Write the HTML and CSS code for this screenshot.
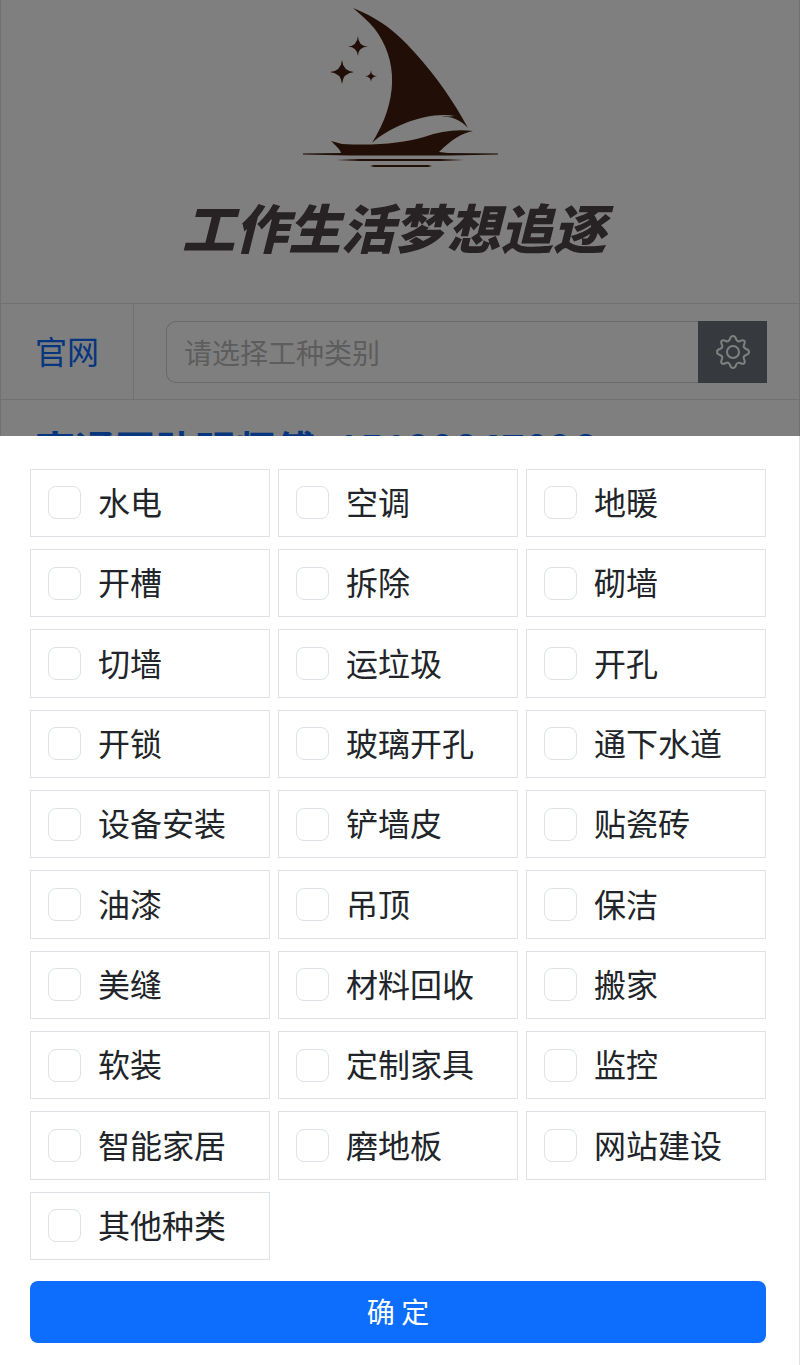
FILE: index.html
```
<!DOCTYPE html>
<html lang="zh-CN">
<head>
    <meta charset="UTF-8">
    <meta name="viewport" content="width=device-width, initial-scale=1">
    <title>工作生活梦想追逐</title>
    <link rel="stylesheet" href="styles.css">
</head>
<body>
    <div class="page">
        <header class="banner">
            <svg class="logo" viewBox="0 0 200 166" aria-hidden="true">
                <!-- sail -->
                <path d="M53 8C85 21 101 37 116 54C136 76 154 102 168 128C160 120 152 116 142 117L155 116C129 111 90 126 72 143C98 102 99 60 74 28C67 20 60 14 53 8Z"/>
                <!-- hull -->
                <path d="M31 141L42 144C76 146 103 143 124 137C141 131 156 129 173 131C162 133 151 140 139 152L148 153L198 153.500L198 154.500L150 155.500L50 155.500L3 154.500L3 153.500L41 153C40 149 36 146 31 141Z"/>
                <path d="M36 160L60 159L140 159L164 160L140 161L60 161Z"/>
                <path d="M70 166L74 165L128 165L132 166L128 167L74 167Z"/>
                <!-- stars -->
                <path d="M58 36Q58 46 68 46.500Q58 47 58 56Q57 47 48 46.500Q57 46 58 36Z"/>
                <path d="M42 60Q43 71 54 72Q43 73 42 84Q41 73 30 72Q41 71 42 60Z"/>
                <path d="M71 70Q71 76 77 76Q71 77 71 82Q71 77 65 76Q71 76 71 70Z"/>
            </svg>
            <h1 class="slogan">工作生活梦想追逐</h1>
        </header>
        <div class="toolbar">
            <a class="site-link" href="#">官网</a>
            <div class="search">
                <input class="search-input" type="text" placeholder="请选择工种类别" aria-label="工种类别">
                <button class="search-button" type="button" aria-label="选择工种">
                    <svg viewBox="0 0 34 34" aria-hidden="true">
                        <circle cx="17" cy="17" r="6"/>
                        <path d="M14 4C15 0 19 0 20 4C21 6 22 7 24 6C28 4 30 6 28 10C27 12 28 13 30 14C34 15 34 19 30 20C28 21 27 22 28 24C30 28 28 30 24 28C22 27 21 28 20 30C19 34 15 34 14 30C13 28 12 27 10 28C6 30 4 28 6 24C7 22 6 21 4 20C0 19 0 15 4 14C6 13 7 12 6 10C4 6 6 4 10 6C12 7 13 6 14 4Z"/>
                    </svg>
                </button>
            </div>
        </div>
        <h2 class="contact"><a href="#">南通互助明师傅</a> <a href="#">15190847096</a></h2>
    </div>

    <div class="backdrop"></div>

    <form class="sheet">
        <div class="options">
            <label class="option"><input type="checkbox"><span>水电</span></label>
            <label class="option"><input type="checkbox"><span>空调</span></label>
            <label class="option"><input type="checkbox"><span>地暖</span></label>
            <label class="option"><input type="checkbox"><span>开槽</span></label>
            <label class="option"><input type="checkbox"><span>拆除</span></label>
            <label class="option"><input type="checkbox"><span>砌墙</span></label>
            <label class="option"><input type="checkbox"><span>切墙</span></label>
            <label class="option"><input type="checkbox"><span>运垃圾</span></label>
            <label class="option"><input type="checkbox"><span>开孔</span></label>
            <label class="option"><input type="checkbox"><span>开锁</span></label>
            <label class="option"><input type="checkbox"><span>玻璃开孔</span></label>
            <label class="option"><input type="checkbox"><span>通下水道</span></label>
            <label class="option"><input type="checkbox"><span>设备安装</span></label>
            <label class="option"><input type="checkbox"><span>铲墙皮</span></label>
            <label class="option"><input type="checkbox"><span>贴瓷砖</span></label>
            <label class="option"><input type="checkbox"><span>油漆</span></label>
            <label class="option"><input type="checkbox"><span>吊顶</span></label>
            <label class="option"><input type="checkbox"><span>保洁</span></label>
            <label class="option"><input type="checkbox"><span>美缝</span></label>
            <label class="option"><input type="checkbox"><span>材料回收</span></label>
            <label class="option"><input type="checkbox"><span>搬家</span></label>
            <label class="option"><input type="checkbox"><span>软装</span></label>
            <label class="option"><input type="checkbox"><span>定制家具</span></label>
            <label class="option"><input type="checkbox"><span>监控</span></label>
            <label class="option"><input type="checkbox"><span>智能家居</span></label>
            <label class="option"><input type="checkbox"><span>磨地板</span></label>
            <label class="option"><input type="checkbox"><span>网站建设</span></label>
            <label class="option"><input type="checkbox"><span>其他种类</span></label>
        </div>
        <button class="confirm" type="button">确 定</button>
    </form>
</body>
</html>
```
FILE: styles.css
```
* {
    box-sizing: border-box;
}
body {
    margin: 0;
    overflow: hidden;
    background-color: white;
    color: #212529;
    font-family: "Noto Sans CJK SC", sans-serif;
}
button, input {
    font-family: inherit;
}
.page {
    border: 1px solid #dee2e6;
    border-top: 0;
}
.banner {
    display: flex;
    flex-direction: column;
    align-items: center;
    height: 304px;
    border-bottom: 1px solid #dee2e6;
}
.logo {
    width: 200px;
    height: 166px;
    overflow: visible;
    fill: #421f0e;
}
.slogan {
    margin: 20px 0 0;
    padding-right: 12px;
    color: #4e4446;
    font-size: 53px;
    font-style: italic;
    font-weight: 900;
    line-height: 80px;
}
.toolbar {
    display: flex;
    height: 96px;
    border-bottom: 1px solid #dee2e6;
}
.site-link {
    display: flex;
    align-items: center;
    padding: 0 34px 4px;
    border-right: 1px solid #dee2e6;
    color: #0d6efd;
    font-size: 32px;
    text-decoration: none;
}
.search {
    display: flex;
    flex: 1;
    align-items: center;
    padding: 0 32px;
}
.search-input {
    flex: 1;
    min-width: 0;
    height: 62px;
    padding: 0 17px;
    border: 1px solid #ced4da;
    border-right: 0;
    border-radius: 10px 0 0 10px;
    font-size: 28px;
}
.search-input::placeholder {
    color: #bbb;
}
.search-button {
    display: flex;
    align-items: center;
    justify-content: center;
    width: 69px;
    height: 62px;
    padding: 0;
    border: 0;
    background-color: #6c757d;
}
.search-button svg {
    width: 34px;
    height: 34px;
    fill: none;
    stroke: white;
    stroke-width: 2;
}
.contact {
    margin: 0;
    padding: 18px 34px;
    font-size: 40px;
    line-height: 60px;
}
.contact a {
    color: #0d6efd;
    text-decoration: none;
}
.contact a + a {
    margin-left: 12px;
}
.backdrop {
    position: fixed;
    inset: 0;
    background-color: rgba(0, 0, 0, 0.5);
}
.sheet {
    display: flex;
    flex-direction: column;
    gap: 21px;
    position: fixed;
    right: 0;
    bottom: 0;
    left: 0;
    height: calc(68vh + 1px);
    padding: 33px 33px 22px 30px;
    border-right: 1px solid #dee2e6;
    background-color: white;
}
.options {
    display: grid;
    flex: 1;
    grid-template-columns: repeat(3, 1fr);
    grid-auto-rows: 1fr;
    gap: 12px 8px;
}
.option {
    display: flex;
    align-items: center;
    gap: 17px;
    padding: 0 17px;
    border: 1px solid #dee2e6;
    font-size: 32px;
    line-height: 48px;
}
.option span {
    padding-bottom: 4px;
}
.option input {
    appearance: none;
    width: 33px;
    height: 33px;
    margin: 0;
    border: 1px solid #dee2e6;
    border-radius: 8px;
}
.option input:checked {
    border-color: #0d6efd;
    background-color: #0d6efd;
}
.confirm {
    height: 62px;
    padding: 0 0 2px;
    border: 0;
    border-radius: 8px;
    background-color: #0d6efd;
    color: white;
    font-size: 28px;
}
```
